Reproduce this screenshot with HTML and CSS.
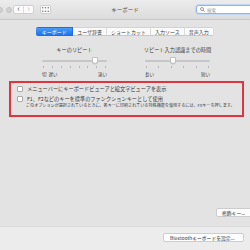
FILE: index.html
```html
<!DOCTYPE html>
<html lang="ja">
<head>
    <meta charset="UTF-8">
    <title>キーボード</title>
    <link rel="stylesheet" href="styles.css">
</head>
<body>
    <div class="window">
        <div class="titlebar">
            <div class="lights"><span></span><span></span></div>
            <div class="nav">
                <span class="nav-btn">&#8249;</span>
                <span class="nav-btn dim">&#8250;</span>
            </div>
            <div class="grid-btn">
                <svg width="7" height="5" viewBox="0 0 7 5">
                    <g fill="#8a8a8a">
                        <rect x="0" y="0" width="1.4" height="1.4"/><rect x="2.8" y="0" width="1.4" height="1.4"/><rect x="5.6" y="0" width="1.4" height="1.4"/>
                        <rect x="0" y="3.6" width="1.4" height="1.4"/><rect x="2.8" y="3.6" width="1.4" height="1.4"/><rect x="5.6" y="3.6" width="1.4" height="1.4"/>
                    </g>
                </svg>
            </div>
            <div class="title">キーボード</div>
            <div class="search">
                <svg width="5" height="5" viewBox="0 0 10 10">
                    <circle cx="4" cy="4" r="3" fill="none" stroke="#777" stroke-width="1.4"/>
                    <line x1="6.2" y1="6.2" x2="9" y2="9" stroke="#777" stroke-width="1.6"/>
                </svg>
                <span>検索</span>
            </div>
        </div>

        <div class="content">
            <div class="tabs">
                <span class="tab active">キーボード</span>
                <span class="tab">ユーザ辞書</span>
                <span class="tab">ショートカット</span>
                <span class="tab">入力ソース</span>
                <span class="tab">音声入力</span>
            </div>

            <div class="sliders">
                <div class="slider">
                    <div class="slider-label">キーのリピート</div>
                    <div class="track"><span class="knob" style="left: 82%"></span></div>
                    <div class="ticks"><i></i><i></i><i></i><i></i><i></i><i></i><i></i><i></i></div>
                    <div class="ends"><span>切 &nbsp;遅い</span><span>速い</span></div>
                </div>
                <div class="slider">
                    <div class="slider-label">リピート入力認識までの時間</div>
                    <div class="track"><span class="knob" style="left: 43%"></span></div>
                    <div class="ticks"><i></i><i></i><i></i><i></i><i></i><i></i></div>
                    <div class="ends"><span>長い</span><span>短い</span></div>
                </div>
            </div>

            <div class="highlight">
                <div class="check-row"><span class="box"></span>メニューバーにキーボードビューアと絵文字ビューアを表示</div>
                <div class="check-row"><span class="box"></span>F1、F2などのキーを標準のファンクションキーとして使用</div>
                <div class="note">このオプションが選択されているときに、各キーに印刷されている特殊機能を使用するには、Fnキーを押します。</div>
            </div>

            <div class="modifier">
                <span class="button">修飾キー...</span>
            </div>
        </div>

        <div class="footer">
            <span class="button">Bluetoothキーボードを設定...</span>
        </div>
    </div>
</body>
</html>
```

FILE: styles.css
```css
html, body {
    margin: 0;
    padding: 0;
}
body {
    font-family: "Noto Sans CJK JP", "Noto Sans", sans-serif;
    color: #333;
    background: #e3e3e3;
}
.window {
    width: 250px;
    height: 250px;
    display: flex;
    flex-direction: column;
    overflow: hidden;
}

/* title bar */
.titlebar {
    height: 20px;
    box-sizing: border-box;
    display: flex;
    align-items: center;
    background: linear-gradient(#ececec, #dcdcdc);
    border-bottom: 1px solid #c8c8c8;
    position: relative;
}
.lights {
    display: flex;
    gap: 3px;
    margin-left: -3px;
    width: 16px;
}
.lights span {
    width: 6px;
    height: 6px;
    border-radius: 50%;
    background: #d0d0d0;
    border: 1px solid #c4c4c4;
    box-sizing: border-box;
}
.nav {
    display: flex;
    height: 9px;
    width: 21px;
    background: #fbfbfb;
    border: 1px solid #cfcfcf;
    border-radius: 2px;
    box-sizing: border-box;
}
.nav-btn {
    flex: 1;
    font-size: 9px;
    line-height: 6px;
    text-align: center;
    color: #6a6a6a;
}
.nav-btn.dim {
    color: #c6c6c6;
    border-left: 1px solid #dcdcdc;
}
.grid-btn {
    margin-left: 6px;
    width: 11px;
    height: 9px;
    background: #fbfbfb;
    border: 1px solid #cfcfcf;
    border-radius: 2px;
    box-sizing: border-box;
    display: flex;
    align-items: center;
    justify-content: center;
}
.title {
    position: absolute;
    left: 0;
    right: 0;
    text-align: center;
    font-size: 5.5px;
    color: #555;
    pointer-events: none;
}
.search {
    margin-left: auto;
    margin-right: -4px;
    width: 58px;
    height: 9px;
    box-sizing: border-box;
    background: #fff;
    border: 1px solid #8fb5ea;
    box-shadow: 0 0 0 1px #c2d7f4;
    border-radius: 3px;
    display: flex;
    align-items: center;
    gap: 2px;
    padding-left: 3px;
    font-size: 4.5px;
    color: #999;
}

/* content */
.content {
    flex: 1;
    display: flex;
    flex-direction: column;
    background: #e3e3e3;
}
.tabs {
    display: flex;
    justify-content: center;
    margin-top: 7px;
}
.tab {
    height: 9px;
    box-sizing: border-box;
    padding: 0 4px;
    background: #fafafa;
    border-top: 1px solid #d2d2d2;
    border-bottom: 1px solid #c8c8c8;
    border-right: 1px solid #dcdcdc;
    font-size: 5px;
    line-height: 7px;
    color: #3a3a3a;
    white-space: nowrap;
}
.tab:first-child {
    border-radius: 2px 0 0 2px;
}
.tab:last-child {
    border-radius: 0 2px 2px 0;
}
.tab.active {
    background: linear-gradient(#4a9cf7, #1d74ec);
    border-color: #1f6fd8;
    color: #fff;
    width: 37px;
    text-align: center;
}

.sliders {
    display: flex;
    justify-content: center;
    gap: 38px;
    margin-top: 10px;
    margin-left: 2px;
}
.slider {
    width: 65px;
    display: flex;
    flex-direction: column;
}
.slider-label {
    text-align: center;
    font-size: 5.2px;
    line-height: 7px;
    color: #3a3a3a;
    white-space: nowrap;
    margin: 0 -8px;
}
.track {
    position: relative;
    margin-top: 7px;
    height: 2px;
    background: #c6c6c6;
    border-radius: 1px;
}
.knob {
    position: absolute;
    top: -3px;
    width: 6px;
    height: 7px;
    margin-left: -3px;
    background: #fff;
    border: 1px solid #c0c0c0;
    border-radius: 1px 1px 3px 3px;
    box-sizing: border-box;
    box-shadow: 0 0.5px 0.5px rgba(0,0,0,0.15);
}
.ticks {
    display: flex;
    justify-content: space-between;
    margin-top: 4px;
    padding: 0 1px;
}
.ticks i {
    width: 0.7px;
    height: 2px;
    background: #b5b5b5;
}
.ends {
    display: flex;
    justify-content: space-between;
    margin-top: 4px;
    font-size: 4.5px;
    line-height: 5px;
    color: #444;
}

.highlight {
    margin: 4px 6px 0 9px;
    height: 36px;
    box-sizing: border-box;
    border: 2px solid #e0353f;
    padding: 3px 0 0 6px;
}
.check-row {
    display: flex;
    align-items: center;
    gap: 4px;
    font-size: 5.2px;
    line-height: 6px;
    color: #3a3a3a;
    white-space: nowrap;
    margin-bottom: 4px;
}
.box {
    width: 4px;
    height: 4px;
    background: #fff;
    border: 0.5px solid #aaa;
    border-radius: 1px;
}
.note {
    margin-top: -3px;
    padding-left: 9px;
    font-size: 4.1px;
    line-height: 5px;
    color: #3a3a3a;
    white-space: nowrap;
}

.modifier {
    margin-top: auto;
    margin-bottom: 9px;
    display: flex;
    justify-content: flex-end;
}
.button {
    height: 9px;
    box-sizing: border-box;
    padding: 0 5px;
    background: #fdfdfd;
    border: 0.5px solid #cdcdcd;
    border-radius: 2px;
    font-size: 4.8px;
    line-height: 8px;
    color: #333;
    white-space: nowrap;
}
.modifier .button {
    width: 38px;
    margin-right: -4px;
}

.footer {
    height: 24px;
    box-sizing: border-box;
    background: #ececec;
    border-top: 1px solid #dadada;
    display: flex;
    justify-content: flex-end;
    align-items: flex-start;
    padding: 6px 6px 0 0;
}
.footer .button {
    width: 81px;
    padding: 0 0 0 6px;
}
```
